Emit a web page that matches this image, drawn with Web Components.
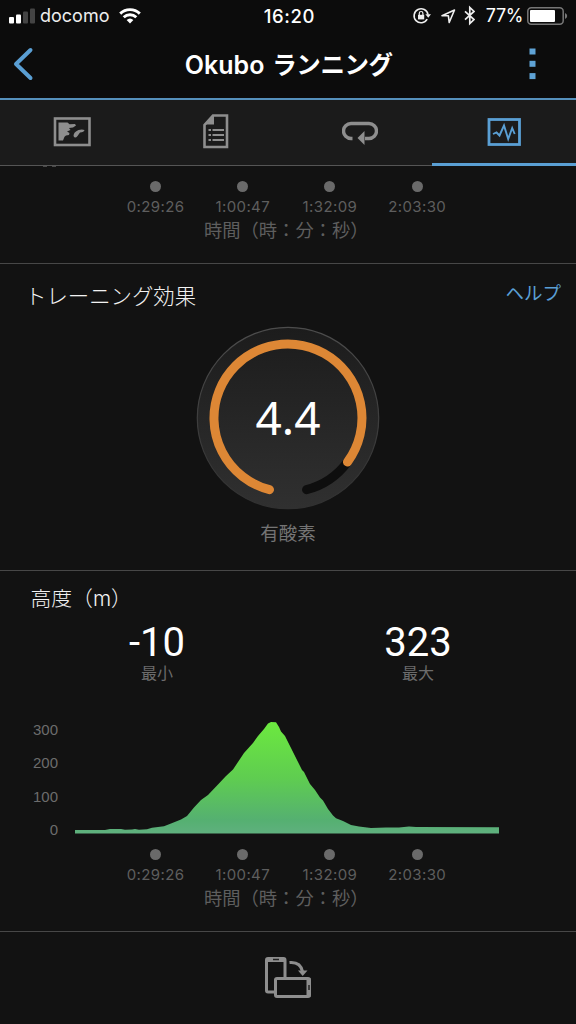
<!DOCTYPE html>
<html lang="ja">
<head>
<meta charset="utf-8">
<title>Okubo ランニング</title>
<style>
  body {
    margin: 0;
    width: 576px;
    height: 1024px;
    overflow: hidden;
    background: #121212;
    color: #fff;
    font-family: Inter, "Noto Sans CJK JP", sans-serif;
  }
</style>
</head>
<body>
<activity-screen></activity-screen>

<script>
/**
 * Phone status bar: signal, carrier, clock and battery
 */
class StatusBar extends HTMLElement {
  connectedCallback() {
    this._root = this.attachShadow({ mode: "open" });
    this._root.innerHTML = `
      <style>
        :host {
          display: grid;
          grid-template-columns: 1fr auto 1fr;
          align-items: center;
          height: 32px;
          background: #0c0c0c;
          font-size: 18px;
          line-height: 32px;
          white-space: nowrap;
        }
        div { display: flex; align-items: center; }
        .left { padding-left: 9px; }
        .carrier { margin: 0 10px 0 5px; color: #eee; }
        .time { font-weight: 500; letter-spacing: 0.6px; font-size: 18.5px; padding-left: 3px; }
        .right { justify-content: flex-end; padding-right: 8px; }
        .percent { margin: 0 4px 0 10.5px; letter-spacing: -0.4px; }
        svg { display: block; }
      </style>
      <div class="left">
        <svg width="26" height="16" viewBox="0 0 26 16">
          <rect x="0" y="9" width="5" height="6.5" rx="1" fill="#fff"/>
          <rect x="7" y="6.5" width="5" height="9" rx="1" fill="#fff"/>
          <rect x="14" y="3.5" width="5" height="12" rx="1" fill="#444"/>
          <rect x="21" y="0.5" width="5" height="15" rx="1" fill="#444"/>
        </svg>
        <span class="carrier">docomo</span>
        <svg width="22" height="16" viewBox="0 0 22 16" fill="none" stroke="#fff" stroke-width="2.9">
          <path d="M1.2 5.6a14 14 0 0 1 19.6 0"/>
          <path d="M4.7 9.3a9 9 0 0 1 12.6 0"/>
          <path d="M7.6 12a5 5 0 0 1 6.8 0L11 15.5z" fill="#fff" stroke="none"/>
        </svg>
      </div>
      <div class="time">16:20</div>
      <div class="right">
        <svg width="64" height="22" viewBox="0 0 64 22" fill="none" stroke="#eee" stroke-width="1.6">
          <path d="M16.200 14.200a7 7 0 1 1 .8-4.600"/>
          <path d="M14.400 9.200h5.600l-2.800 3.600z" fill="#eee" stroke="none"/>
          <rect x="7" y="9.800" width="6.200" height="4.600" fill="#eee" stroke="none"/>
          <path d="M8.300 10V8.300a1.800 1.800 0 0 1 3.600 0V10" stroke-width="1.200"/>
          <path d="M31 10.800 43.500 5l-5.300 12.500-.8-6.700z" stroke-width="1.600" stroke-linejoin="round"/>
          <path d="M54 6.400l9 8.200-4.200 4V2.400L63 6.400 54 14.600" stroke-width="1.700"/>
        </svg>
        <span class="percent">77%</span>
        <svg width="41" height="18" viewBox="0 0 41 18">
          <rect x="0.800" y="0.800" width="35.400" height="16.400" rx="3.500" fill="none" stroke="#777" stroke-width="1.500"/>
          <rect x="3" y="3" width="25" height="12" rx="1" fill="#fff"/>
          <path d="M38 6v6q2.200-1 2.200-3T38 6z" fill="#777"/>
        </svg>
      </div>
    `;
  }
}

/**
 * Header with back arrow, slotted title and the overflow menu
 */
class NavHeader extends HTMLElement {
  connectedCallback() {
    this._root = this.attachShadow({ mode: "open" });
    this._root.innerHTML = `
      <style>
        :host {
          display: flex;
          align-items: center;
          justify-content: space-between;
          box-sizing: border-box;
          height: 68px;
          padding: 0 39.500px 3px 12px;
          background: #0c0c0c;
          border-bottom: 2px solid #5590bc;
        }
        h1 {
          margin: 2px 0 0 14px;
          font-size: 25px;
          font-weight: 600;
          letter-spacing: 0;
          line-height: 36px;
          white-space: nowrap;
        }
        ::slotted(span) { letter-spacing: -0.4px; font-size: 24.500px; margin-left: 1.500px; }
        svg { display: block; }
      </style>
      <svg width="22" height="34" viewBox="0 0 22 34">
        <path d="M18.500 3 4 17l14.500 14" fill="none" stroke="#5a9fd4" stroke-width="4" stroke-linecap="round" stroke-linejoin="round"/>
      </svg>
      <h1><slot></slot></h1>
      <svg width="7" height="32" viewBox="0 0 7 32" fill="#5fa3d6">
        <rect x="0.500" y="0.500" width="6" height="6"/>
        <rect x="0.500" y="12.800" width="6" height="6"/>
        <rect x="0.500" y="25.100" width="6" height="6"/>
      </svg>
    `;
  }
}

/**
 * One tab, the icon goes in the slot
 */
class TabItem extends HTMLElement {
  connectedCallback() {
    this._root = this.attachShadow({ mode: "open" });
    this._root.innerHTML = `
      <style>
        :host {
          display: flex;
          align-items: center;
          justify-content: center;
          box-sizing: border-box;
          height: 66px;
          padding-bottom: 2px;
          color: #8e8e8e;
          border-bottom: 1px solid #555;
        }
        :host([active]) {
          color: #5a9fd4;
          border-bottom: 3px solid #5a9fd4;
          padding-bottom: 0;
        }
      </style>
      <slot></slot>
    `;
  }
}

class TabBar extends HTMLElement {
  connectedCallback() {
    this._root = this.attachShadow({ mode: "open" });
    this._root.innerHTML = `
      <style>
        :host {
          display: grid;
          grid-template-columns: repeat(4, 1fr);
          height: 66px;
          background: #1b1b1b;
        }
        svg { display: block; }
      </style>
      <tab-item>
        <svg width="38" height="30" viewBox="0 0 38 30">
          <rect x="2" y="1.500" width="34.500" height="26.500" fill="none" stroke="currentColor" stroke-width="2.600"/>
          <path d="M5.500 5.500h9l2 1.700 5.500-.2 1 1.500-3 2.100-4 .4 1.500 2-3.500 1.500 2.500 1.500-.5 2-3 .5-1.500 1.200-1.500 3.800h-4.500z" fill="currentColor"/>
          <path d="M31.500 13q-2.500-1.200-6 0-5 2-5 6 1.500 3 4 0l2.500-3.500q4-.5 4.500-2.500z" fill="currentColor"/>
        </svg>
      </tab-item>
      <tab-item>
        <svg width="26" height="35" viewBox="0 0 26 35">
          <path d="M10 1.500h14v31.500h-22.500v-22z" fill="none" stroke="currentColor" stroke-width="2.600"/>
          <path d="M11 1v9.500H1z" fill="currentColor"/>
          <path d="M9.500 16h11.500M9.500 21h11.500M9.500 26h11.500M5.500 16h2.500M5.500 21h2.500M5.500 26h2.500" stroke="currentColor" stroke-width="2.200"/>
        </svg>
      </tab-item>
      <tab-item>
        <svg width="36" height="26" viewBox="0 0 36 26">
          <path d="M10.500 19.500h-1.500a7.300 7.300 0 0 1 0-15h18a7.300 7.300 0 0 1 0 15h-4" fill="none" stroke="currentColor" stroke-width="3.400"/>
          <path d="M15.500 19 22.500 12v14z" fill="currentColor"/>
        </svg>
      </tab-item>
      <tab-item active>
        <svg width="34" height="28" viewBox="0 0 34 28" fill="none" stroke="currentColor">
          <rect x="2" y="1.500" width="30.500" height="25" stroke-width="2.800"/>
          <path d="M6 16l3.500-1.500 3 3 4.500-10 4.200 13.500 4-11 2.500 6" stroke-width="1.900"/>
        </svg>
      </tab-item>
    `;
  }
}

/**
 * Dots and time stamps under a chart
 */
class TimeAxis extends HTMLElement {
  connectedCallback() {
    const times = ["0:29:26", "1:00:47", "1:32:09", "2:03:30"];
    this._root = this.attachShadow({ mode: "open" });
    this._root.innerHTML = `
      <style>
        :host { display: block; color: #5e5e5e; }
        .marks {
          display: grid;
          grid-template-columns: repeat(4, 87.200px);
          margin-left: 112px;
        }
        .mark {
          display: flex;
          flex-direction: column;
          align-items: center;
          gap: 5px;
          font-size: 15px;
          line-height: 20px;
          letter-spacing: 0.4px;
        }
        .mark::before {
          content: "";
          width: 11px;
          height: 11px;
          border-radius: 50%;
          background: #6a6a6a;
        }
        .caption {
          margin-left: 204px;
          font: 400 18.300px/24px "Noto Sans CJK JP", sans-serif;
          white-space: nowrap;
        }
      </style>
      <div class="marks">${times.map((t) => `<div class="mark">${t}</div>`).join("")}</div>
      <div class="caption">時間（時：分：秒）</div>
    `;
  }
}

/**
 * Round gauge, the score is passed in as an attribute
 */
class EffectGauge extends HTMLElement {
  connectedCallback() {
    let score = this.getAttribute("score");
    this._root = this.attachShadow({ mode: "open" });
    this._root.innerHTML = `
      <style>
        :host { display: flex; flex-direction: column; align-items: center; }
        .dial { display: grid; place-items: center; }
        .dial > * { grid-area: 1 / 1; }
        .score { font: 400 46px/60px "Noto Sans", sans-serif; padding-bottom: 3px; }
        .name {
          margin-top: 9px;
          font: 400 18.500px/26px "Noto Sans CJK JP", sans-serif;
          color: #747474;
        }
      </style>
      <div class="dial">
        <svg width="184" height="184" viewBox="-92 -92 184 184" fill="none" stroke-linecap="round">
          <defs>
            <linearGradient id="face" x1="0" y1="0" x2="0" y2="1">
              <stop offset="0" stop-color="#1c1c1c"/>
              <stop offset="1" stop-color="#303030"/>
            </linearGradient>
            <linearGradient id="edge" x1="0" y1="0" x2="0" y2="1">
              <stop offset="0" stop-color="#4c4c4c"/>
              <stop offset="1" stop-color="#303030"/>
            </linearGradient>
          </defs>
          <circle r="90.700" fill="url(#face)" stroke="url(#edge)" stroke-width="1.200"/>
          <path d="M18.500 71.700A74 74 0 0 0 59.500 44" stroke="#0e0e0e" stroke-width="9"/>
          <path d="M-18.500 71.700A74 74 0 1 1 59.500 44" stroke="#dd8735" stroke-width="9"/>
        </svg>
        <span class="score">${score}</span>
      </div>
      <div class="name"><slot></slot></div>
    `;
  }
}

/**
 * Big number with a small label below
 */
class StatValue extends HTMLElement {
  connectedCallback() {
    let value = this.getAttribute("value");
    this._root = this.attachShadow({ mode: "open" });
    this._root.innerHTML = `
      <style>
        :host { display: flex; flex-direction: column; align-items: center; }
        .value { font: 400 40px/40px Roboto, sans-serif; }
        .label {
          margin-top: 1px;
          height: 20px;
          font: 400 16px/20px Roboto, "Noto Sans CJK JP", sans-serif;
          color: #6c6c6c;
        }
      </style>
      <div class="value">${value}</div>
      <div class="label"><slot></slot></div>
    `;
  }
}

class ElevationChart extends HTMLElement {
  connectedCallback() {
    // Outline of the run, from start to finish
    const points = `0,110 30,110 35,109 46,109 50,109.700 57,109.500 60,109 64,109.700 72,109.300 77,107.700
      89,106.300 96,103.500 106,99.500 112,96 119,87.500 126,80 133,75 143,64.500 151,56 158,49.500
      163,42 169,33 178,23 183,16 189,9 193,3.500 196,2 201,2.300 204,7 206,11.500 210,16 216,28 223,42
      227,50 229,52 235,64 240,70 245,77.500 248,80.500 253,89 258,95.500 261,98.300 268,101 276,105
      284,106.500 296,108 311,107.500 324,107.500 334,106.500 341,107 424,107.200 424,113.500 0,113.500`;
    this._root = this.attachShadow({ mode: "open" });
    this._root.innerHTML = `
      <style>
        :host { display: flex; height: 114px; }
        .scale {
          display: flex;
          flex-direction: column;
          width: 58px;
          margin-right: 16.500px;
          text-align: right;
          font: 15px/33.400px "Liberation Sans", sans-serif;
          color: #6c6c6c;
          margin-top: -7px;
        }
        svg { display: block; }
      </style>
      <div class="scale"><span>300</span><span>200</span><span>100</span><span>0</span></div>
      <svg width="424" height="114" viewBox="0 0 424 114">
        <defs>
          <linearGradient id="hill" x1="0" y1="0" x2="0" y2="1">
            <stop offset="0" stop-color="#6ce93f"/>
            <stop offset="0.500" stop-color="#5fcd50"/>
            <stop offset="0.880" stop-color="#55b071"/>
            <stop offset="1" stop-color="#5fb07e"/>
          </linearGradient>
        </defs>
        <polygon points="${points}" fill="url(#hill)"/>
      </svg>
    `;
  }
}

/**
 * Block of the page with a line on top
 */
class PanelSection extends HTMLElement {
  connectedCallback() {
    this._root = this.attachShadow({ mode: "open" });
    this._root.innerHTML = `
      <style>
        :host {
          display: block;
          box-sizing: border-box;
          border-top: 1px solid #474747;
        }
        header {
          display: flex;
          justify-content: space-between;
          white-space: nowrap;
        }
        header ::slotted(*) { display: block; }
      </style>
      <header><slot name="title"></slot><slot name="link"></slot></header>
      <slot></slot>
    `;
  }
}

class ActivityScreen extends HTMLElement {
  connectedCallback() {
    this._root = this.attachShadow({ mode: "open" });
    this._root.innerHTML = `
      <style>
        :host {
          display: grid;
          grid-template-rows: 32px 68px 66px 97px 307px 361px 93px;
          height: 1024px;
        }
        .previous { display: flex; flex-direction: column; }
        /* lower edge of the scrolled away scale */
        .cut {
          display: flex;
          gap: 5px;
          height: 1px;
          margin-left: 43px;
        }
        .cut i { width: 4px; background: #4a4a4a; }
        .previous time-axis { margin-top: 14px; }
        .title {
          height: 28px;
          font: 300 20.800px/28px Inter, "Noto Sans CJK JP", sans-serif;
          color: #f2f2f2;
        }
        .effect .title { font-size: 21.400px; margin: 18px 0 0 25px; }
        .help {
          font: 400 18.500px/26px "Noto Sans CJK JP", sans-serif;
          color: #5a9fd4;
          margin: 15px 15px 0 0;
        }
        effect-gauge { margin-top: 16px; }
        .altitude .title { margin: 14px 0 0 30.500px; }
        .stats {
          display: grid;
          grid-template-columns: 261px 261px;
          margin: 10px 0 0 26.500px;
        }
        elevation-chart { margin-top: 36px; }
        .altitude time-axis { margin-top: 15px; }
        .rotate svg { display: block; margin: 24px auto 0; }
      </style>
      <status-bar></status-bar>
      <nav-header>Okubo <span>ランニング</span></nav-header>
      <tab-bar></tab-bar>
      <div class="previous">
        <div class="cut"><i></i><i></i></div>
        <time-axis></time-axis>
      </div>
      <panel-section class="effect">
        <span slot="title" class="title">トレーニング効果</span>
        <span slot="link" class="help">ヘルプ</span>
        <effect-gauge score="4.4">有酸素</effect-gauge>
      </panel-section>
      <panel-section class="altitude">
        <span slot="title" class="title">高度（m）</span>
        <div class="stats">
          <stat-value value="-10">最小</stat-value>
          <stat-value value="323">最大</stat-value>
        </div>
        <elevation-chart></elevation-chart>
        <time-axis></time-axis>
      </panel-section>
      <panel-section class="rotate">
        <svg width="48" height="43" viewBox="0 0 48 43" fill="none" stroke="#8e8e8e">
          <rect x="2.500" y="2.500" width="18.500" height="33.500" rx="1.500" stroke-width="3"/>
          <path d="M2 4h19" stroke-width="4"/>
          <path d="M9 3.500h6" stroke="#222" stroke-width="1.500"/>
          <rect x="11.500" y="22.500" width="34" height="18" rx="1.500" stroke-width="3" fill="#121212"/>
          <path d="M44.500 22v19" stroke-width="4"/>
          <path d="M45 29v5" stroke="#222" stroke-width="1.500"/>
          <path d="M25.500 6.500q11-1 13 9" stroke-width="3"/>
          <path d="M34 14.500h9.500l-4.800 5.500z" fill="#8e8e8e" stroke="none"/>
        </svg>
      </panel-section>
    `;
  }
}

customElements.define("status-bar", StatusBar);
customElements.define("nav-header", NavHeader);
customElements.define("tab-item", TabItem);
customElements.define("tab-bar", TabBar);
customElements.define("time-axis", TimeAxis);
customElements.define("effect-gauge", EffectGauge);
customElements.define("stat-value", StatValue);
customElements.define("elevation-chart", ElevationChart);
customElements.define("panel-section", PanelSection);
customElements.define("activity-screen", ActivityScreen);
</script>
</body>
</html>
